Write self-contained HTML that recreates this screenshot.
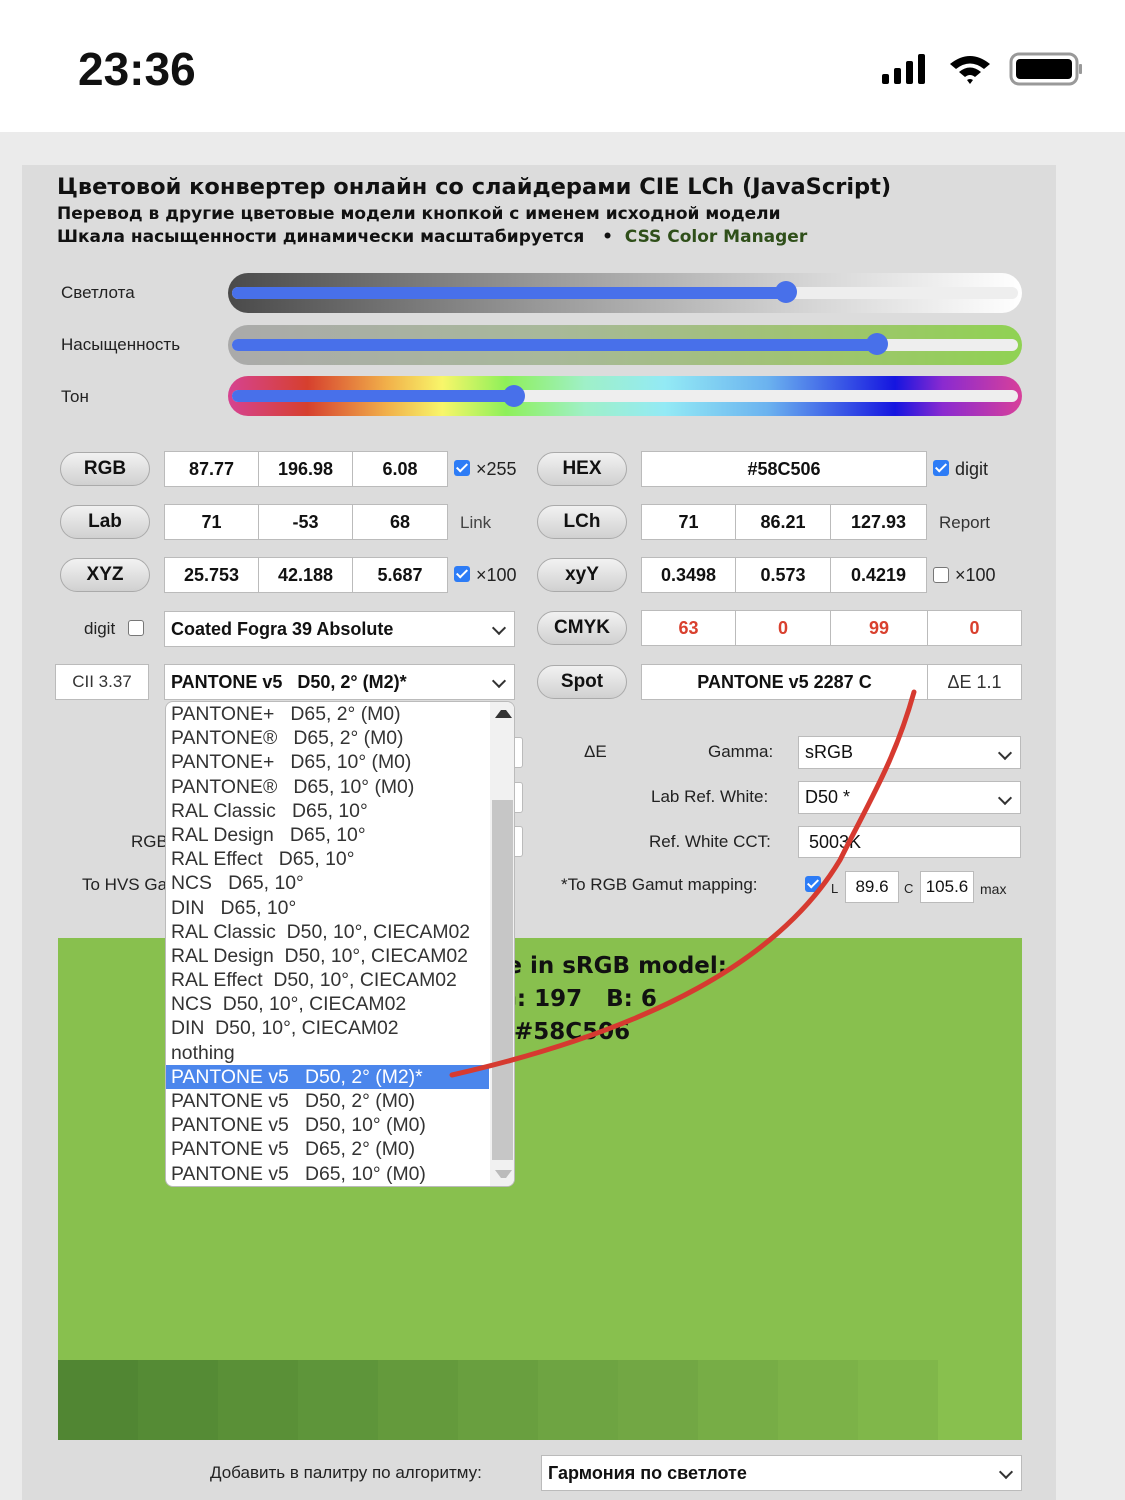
<!DOCTYPE html>
<html><head><meta charset="utf-8">
<style>
*{margin:0;padding:0;box-sizing:border-box}
body{width:1125px;height:1500px;position:relative;overflow:hidden;background:#ebebeb;font-family:"Liberation Sans",sans-serif;color:#111}
.a{position:absolute}
.btn{position:absolute;width:90px;height:34px;border:1px solid #aaa;border-radius:17px;background:linear-gradient(#f2f2f2,#d0d0d0);font-weight:bold;font-size:19px;text-align:center;line-height:32px;color:#111}
.in{position:absolute;height:36px;background:#fff;border:1px solid #bbb;font-size:18px;text-align:center;line-height:34px;font-weight:bold;color:#111}
.red{color:#d9402e;font-weight:bold}
.sel{position:absolute;height:36px;background:#fff;border:1px solid #bbb;font-size:18px;line-height:34px;padding-left:6px}
.sel:after{content:"";position:absolute;right:10px;top:11px;width:8px;height:8px;border-right:2px solid #333;border-bottom:2px solid #333;transform:rotate(45deg)}
.lbl{position:absolute;font-size:17px;color:#222}
.cb{position:absolute;width:16px;height:16px;border-radius:3px;background:#2d7cf6}
.cb:after{content:"";position:absolute;left:5px;top:1px;width:4px;height:9px;border-right:2px solid #fff;border-bottom:2px solid #fff;transform:rotate(45deg)}
.cbo{position:absolute;width:16px;height:16px;border-radius:3px;background:#fff;border:1px solid #777}
.track{position:absolute;left:228px;width:794px;height:40px;border-radius:20px}
.bar{position:absolute;left:232px;height:12px;border-radius:6px;top:14px}
.dd div{height:24.2px;line-height:24px;font-size:19.4px;padding-left:5px;color:#333;white-space:pre}
.dv{font-family:"DejaVu Sans",sans-serif;font-weight:bold;white-space:nowrap}
</style></head><body>
<div class="a" style="left:0;top:0;width:1125px;height:132px;background:#fff"></div>
<div class="a" style="left:78px;top:42px;font-size:46px;font-weight:bold;letter-spacing:0px">23:36</div>
<svg class="a" style="left:880px;top:52px" width="205" height="36">
<rect x="2" y="22" width="7" height="10" rx="2"/><rect x="14" y="16" width="7" height="16" rx="2"/><rect x="26" y="9" width="7" height="23" rx="2"/><rect x="38" y="2" width="7" height="30" rx="2"/>
<path d="M70 12 Q90 -4 110 12 L104 17 Q90 6 76 17Z M79 20 Q90 11 101 20 L95 25 Q90 21 85 25Z M87 28 L90 32 L93 28 Q90 26 87 28Z"/>
<rect x="131" y="2" width="66" height="30" rx="8" fill="none" stroke="#999" stroke-width="3"/><rect x="136" y="7" width="56" height="20" rx="4"/><rect x="199" y="12" width="3" height="10" rx="1" fill="#999"/>
</svg>
<div class="a" style="left:22px;top:165px;width:1034px;height:1335px;background:#dcdcdc"></div>
<div class="a dv" style="left:57px;top:174px;font-size:22.5px">Цветовой конвертер онлайн со слайдерами CIE LCh (JavaScript)</div>
<div class="a dv" style="left:57px;top:204px;font-size:17px">Перевод в другие цветовые модели кнопкой с именем исходной модели</div>
<div class="a dv" style="left:57px;top:227px;font-size:17px">Шкала насыщенности динамически масштабируется &nbsp; • &nbsp;<span style="color:#2f4f1a">CSS Color Manager</span></div>

<div class="lbl" style="left:61px;top:283px">Светлота</div>
<div class="lbl" style="left:61px;top:335px">Насыщенность</div>
<div class="lbl" style="left:61px;top:387px">Тон</div>
<div class="track" style="top:273px;background:linear-gradient(90deg,#4a4a4a,#9a9a9a 40%,#d8d8d8 75%,#fff)"><div class="a" style="left:4px;right:4px;top:14px;height:12px;border-radius:6px;background:#eee"></div></div>
<div class="bar" style="top:287px;width:556px;background:#4870ea"></div>
<div class="a" style="left:775px;top:281px;width:22px;height:22px;border-radius:11px;background:#4870ea"></div>
<div class="track" style="top:325px;background:linear-gradient(90deg,#aaa,#a8b89a 40%,#9fc46f 75%,#90d253)"><div class="a" style="left:4px;right:4px;top:14px;height:12px;border-radius:6px;background:#eee"></div></div>
<div class="bar" style="top:339px;width:646px;background:#4870ea"></div>
<div class="a" style="left:866px;top:333px;width:22px;height:22px;border-radius:11px;background:#4870ea"></div>
<div class="track" style="top:376px;background:linear-gradient(90deg,#d64391,#d6402e 10%,#f1b04a 20%,#f8f66a 27%,#8ef059 35%,#9ff0c8 45%,#93eaf5 55%,#6bb2ef 68%,#1515e0 84%,#8a2ad0 90%,#d8409a)"><div class="a" style="left:4px;right:4px;top:14px;height:12px;border-radius:6px;background:#eee"></div></div>
<div class="bar" style="top:390px;width:282px;background:#4870ea"></div>
<div class="a" style="left:503px;top:385px;width:22px;height:22px;border-radius:11px;background:#4870ea"></div>

<div class="btn" style="left:60px;top:452px">RGB</div>
<div class="in" style="left:164px;top:451px;width:95px">87.77</div>
<div class="in" style="left:258px;top:451px;width:95px">196.98</div>
<div class="in" style="left:352px;top:451px;width:96px">6.08</div>
<div class="cb" style="left:454px;top:460px"></div><div class="lbl" style="left:476px;top:459px;font-size:18px">×255</div>
<div class="btn" style="left:537px;top:452px">HEX</div>
<div class="in" style="left:641px;top:451px;width:286px">#58C506</div>
<div class="cb" style="left:933px;top:460px"></div><div class="lbl" style="left:955px;top:459px;font-size:18px">digit</div>

<div class="btn" style="left:60px;top:505px">Lab</div>
<div class="in" style="left:164px;top:504px;width:95px">71</div>
<div class="in" style="left:258px;top:504px;width:95px">-53</div>
<div class="in" style="left:352px;top:504px;width:96px">68</div>
<div class="lbl" style="left:460px;top:513px;color:#444">Link</div>
<div class="btn" style="left:537px;top:505px">LCh</div>
<div class="in" style="left:641px;top:504px;width:95px">71</div>
<div class="in" style="left:735px;top:504px;width:96px">86.21</div>
<div class="in" style="left:830px;top:504px;width:97px">127.93</div>
<div class="lbl" style="left:939px;top:513px;color:#333">Report</div>

<div class="btn" style="left:60px;top:558px">XYZ</div>
<div class="in" style="left:164px;top:557px;width:95px">25.753</div>
<div class="in" style="left:258px;top:557px;width:95px">42.188</div>
<div class="in" style="left:352px;top:557px;width:96px">5.687</div>
<div class="cb" style="left:454px;top:566px"></div><div class="lbl" style="left:476px;top:565px;font-size:18px">×100</div>
<div class="btn" style="left:537px;top:558px">xyY</div>
<div class="in" style="left:641px;top:557px;width:95px">0.3498</div>
<div class="in" style="left:735px;top:557px;width:96px">0.573</div>
<div class="in" style="left:830px;top:557px;width:97px">0.4219</div>
<div class="cbo" style="left:933px;top:567px"></div><div class="lbl" style="left:955px;top:565px;font-size:18px">×100</div>

<div class="lbl" style="left:84px;top:619px">digit</div><div class="cbo" style="left:128px;top:620px"></div>
<div class="sel" style="left:164px;top:611px;width:351px;font-weight:bold">Coated Fogra 39 Absolute</div>
<div class="btn" style="left:537px;top:611px">CMYK</div>
<div class="in red" style="left:641px;top:610px;width:95px">63</div>
<div class="in red" style="left:735px;top:610px;width:96px">0</div>
<div class="in red" style="left:830px;top:610px;width:98px">99</div>
<div class="in red" style="left:927px;top:610px;width:95px">0</div>

<div class="in" style="left:55px;top:664px;width:94px;font-weight:normal;font-size:17px;color:#333">CII 3.37</div>
<div class="sel" style="left:164px;top:664px;width:351px;font-weight:bold">PANTONE v5 &nbsp; D50, 2° (M2)*</div>
<div class="btn" style="left:537px;top:665px">Spot</div>
<div class="in" style="left:641px;top:664px;width:287px">PANTONE v5 2287 C</div>
<div class="in" style="left:927px;top:664px;width:95px;font-weight:normal;color:#333">ΔE 1.1</div>

<div class="a" style="left:505px;top:737px;width:18px;height:31px;background:#fff;border:1px solid #bbb;border-radius:3px"></div>
<div class="a" style="left:505px;top:782px;width:18px;height:31px;background:#fff;border:1px solid #bbb;border-radius:3px"></div>
<div class="a" style="left:505px;top:826px;width:18px;height:31px;background:#fff;border:1px solid #bbb;border-radius:3px"></div>
<div class="lbl" style="left:584px;top:742px">ΔE</div>
<div class="lbl" style="left:708px;top:742px">Gamma:</div>
<div class="sel" style="left:798px;top:736px;width:223px;height:33px;line-height:31px">sRGB</div>
<div class="lbl" style="left:651px;top:787px">Lab Ref. White:</div>
<div class="sel" style="left:798px;top:781px;width:223px;height:33px;line-height:31px">D50 *</div>
<div class="lbl" style="left:649px;top:832px">Ref. White CCT:</div>
<div class="in" style="left:798px;top:826px;width:223px;height:32px;line-height:30px;text-align:left;padding-left:10px;font-weight:normal">5003K</div>
<div class="lbl" style="left:131px;top:832px">RGB</div>
<div class="lbl" style="left:82px;top:875px">To HVS Ga</div>
<div class="lbl" style="left:561px;top:875px">*To RGB Gamut mapping:</div>
<div class="cb" style="left:805px;top:876px"></div>
<div class="lbl" style="left:831px;top:881px;font-size:13px">L</div>
<div class="in" style="left:845px;top:871px;width:54px;height:32px;line-height:30px;font-weight:normal;font-size:17px">89.6</div>
<div class="lbl" style="left:904px;top:881px;font-size:13px">C</div>
<div class="in" style="left:920px;top:871px;width:54px;height:32px;line-height:30px;font-weight:normal;font-size:17px">105.6</div>
<div class="lbl" style="left:980px;top:881px;font-size:14px">max</div>

<div class="a" style="left:58px;top:938px;width:964px;height:502px;background:#88c04e"></div>
<div class="a" style="left:58px;top:1360px;width:964px;height:80px;display:flex">
<div style="width:80px;background:#518633"></div><div style="width:80px;background:#558b35"></div><div style="width:80px;background:#5a9037"></div><div style="width:80px;background:#5e953a"></div><div style="width:80px;background:#649a3c"></div><div style="width:80px;background:#699f3f"></div><div style="width:80px;background:#6ea442"></div><div style="width:80px;background:#72a744"></div><div style="width:80px;background:#77ad46"></div><div style="width:80px;background:#7cb248"></div><div style="width:80px;background:#80b74a"></div><div style="flex:1;background:#88c04e"></div></div>
<div class="a" style="left:490px;top:950px;font-size:23px;font-weight:bold;font-family:'DejaVu Sans',sans-serif;line-height:33px;white-space:pre">ue in sRGB model:
 G: 197   B: 6
   #58C506</div>

<div class="lbl" style="left:210px;top:1463px">Добавить в палитру по алгоритму:</div>
<div class="sel" style="left:541px;top:1455px;width:481px;font-weight:bold">Гармония по светлоте</div>

<div class="a dd" style="left:165px;top:701px;width:350px;height:486px;background:#fff;border:1px solid #bbb;border-radius:8px;overflow:hidden;padding-top:0px">
<div class="a" style="left:324px;top:0;width:25px;height:486px;background:#f1f1f1"></div>
<div class="a" style="left:326px;top:98px;width:21px;height:360px;background:#c6c6c6"></div>
<div class="a" style="left:329px;top:8px;width:0;height:0;border-left:6px solid transparent;border-right:6px solid transparent;border-bottom:8px solid #333"></div>
<div class="a" style="left:329px;top:468px;width:0;height:0;border-left:6px solid transparent;border-right:6px solid transparent;border-top:8px solid #bbb"></div>
<div style="position:relative">PANTONE+   D65, 2° (M0)</div>
<div style="position:relative">PANTONE®   D65, 2° (M0)</div>
<div style="position:relative">PANTONE+   D65, 10° (M0)</div>
<div style="position:relative">PANTONE®   D65, 10° (M0)</div>
<div style="position:relative">RAL Classic   D65, 10°</div>
<div style="position:relative">RAL Design   D65, 10°</div>
<div style="position:relative">RAL Effect   D65, 10°</div>
<div style="position:relative">NCS   D65, 10°</div>
<div style="position:relative">DIN   D65, 10°</div>
<div style="position:relative">RAL Classic  D50, 10°, CIECAM02</div>
<div style="position:relative">RAL Design  D50, 10°, CIECAM02</div>
<div style="position:relative">RAL Effect  D50, 10°, CIECAM02</div>
<div style="position:relative">NCS  D50, 10°, CIECAM02</div>
<div style="position:relative">DIN  D50, 10°, CIECAM02</div>
<div style="position:relative">nothing</div>
<div style="position:relative;background:#4b86ec;color:#fff;width:323px">PANTONE v5   D50, 2° (M2)*</div>
<div style="position:relative">PANTONE v5   D50, 2° (M0)</div>
<div style="position:relative">PANTONE v5   D50, 10° (M0)</div>
<div style="position:relative">PANTONE v5   D65, 2° (M0)</div>
<div style="position:relative">PANTONE v5   D65, 10° (M0)</div>
</div>

<svg class="a" style="left:0;top:0" width="1125" height="1500">
<path d="M914 692 C895 760 870 800 840 860 C780 960 650 1030 452 1075" fill="none" stroke="#d63a30" stroke-width="5" stroke-linecap="round"/>
</svg>
</body></html>
